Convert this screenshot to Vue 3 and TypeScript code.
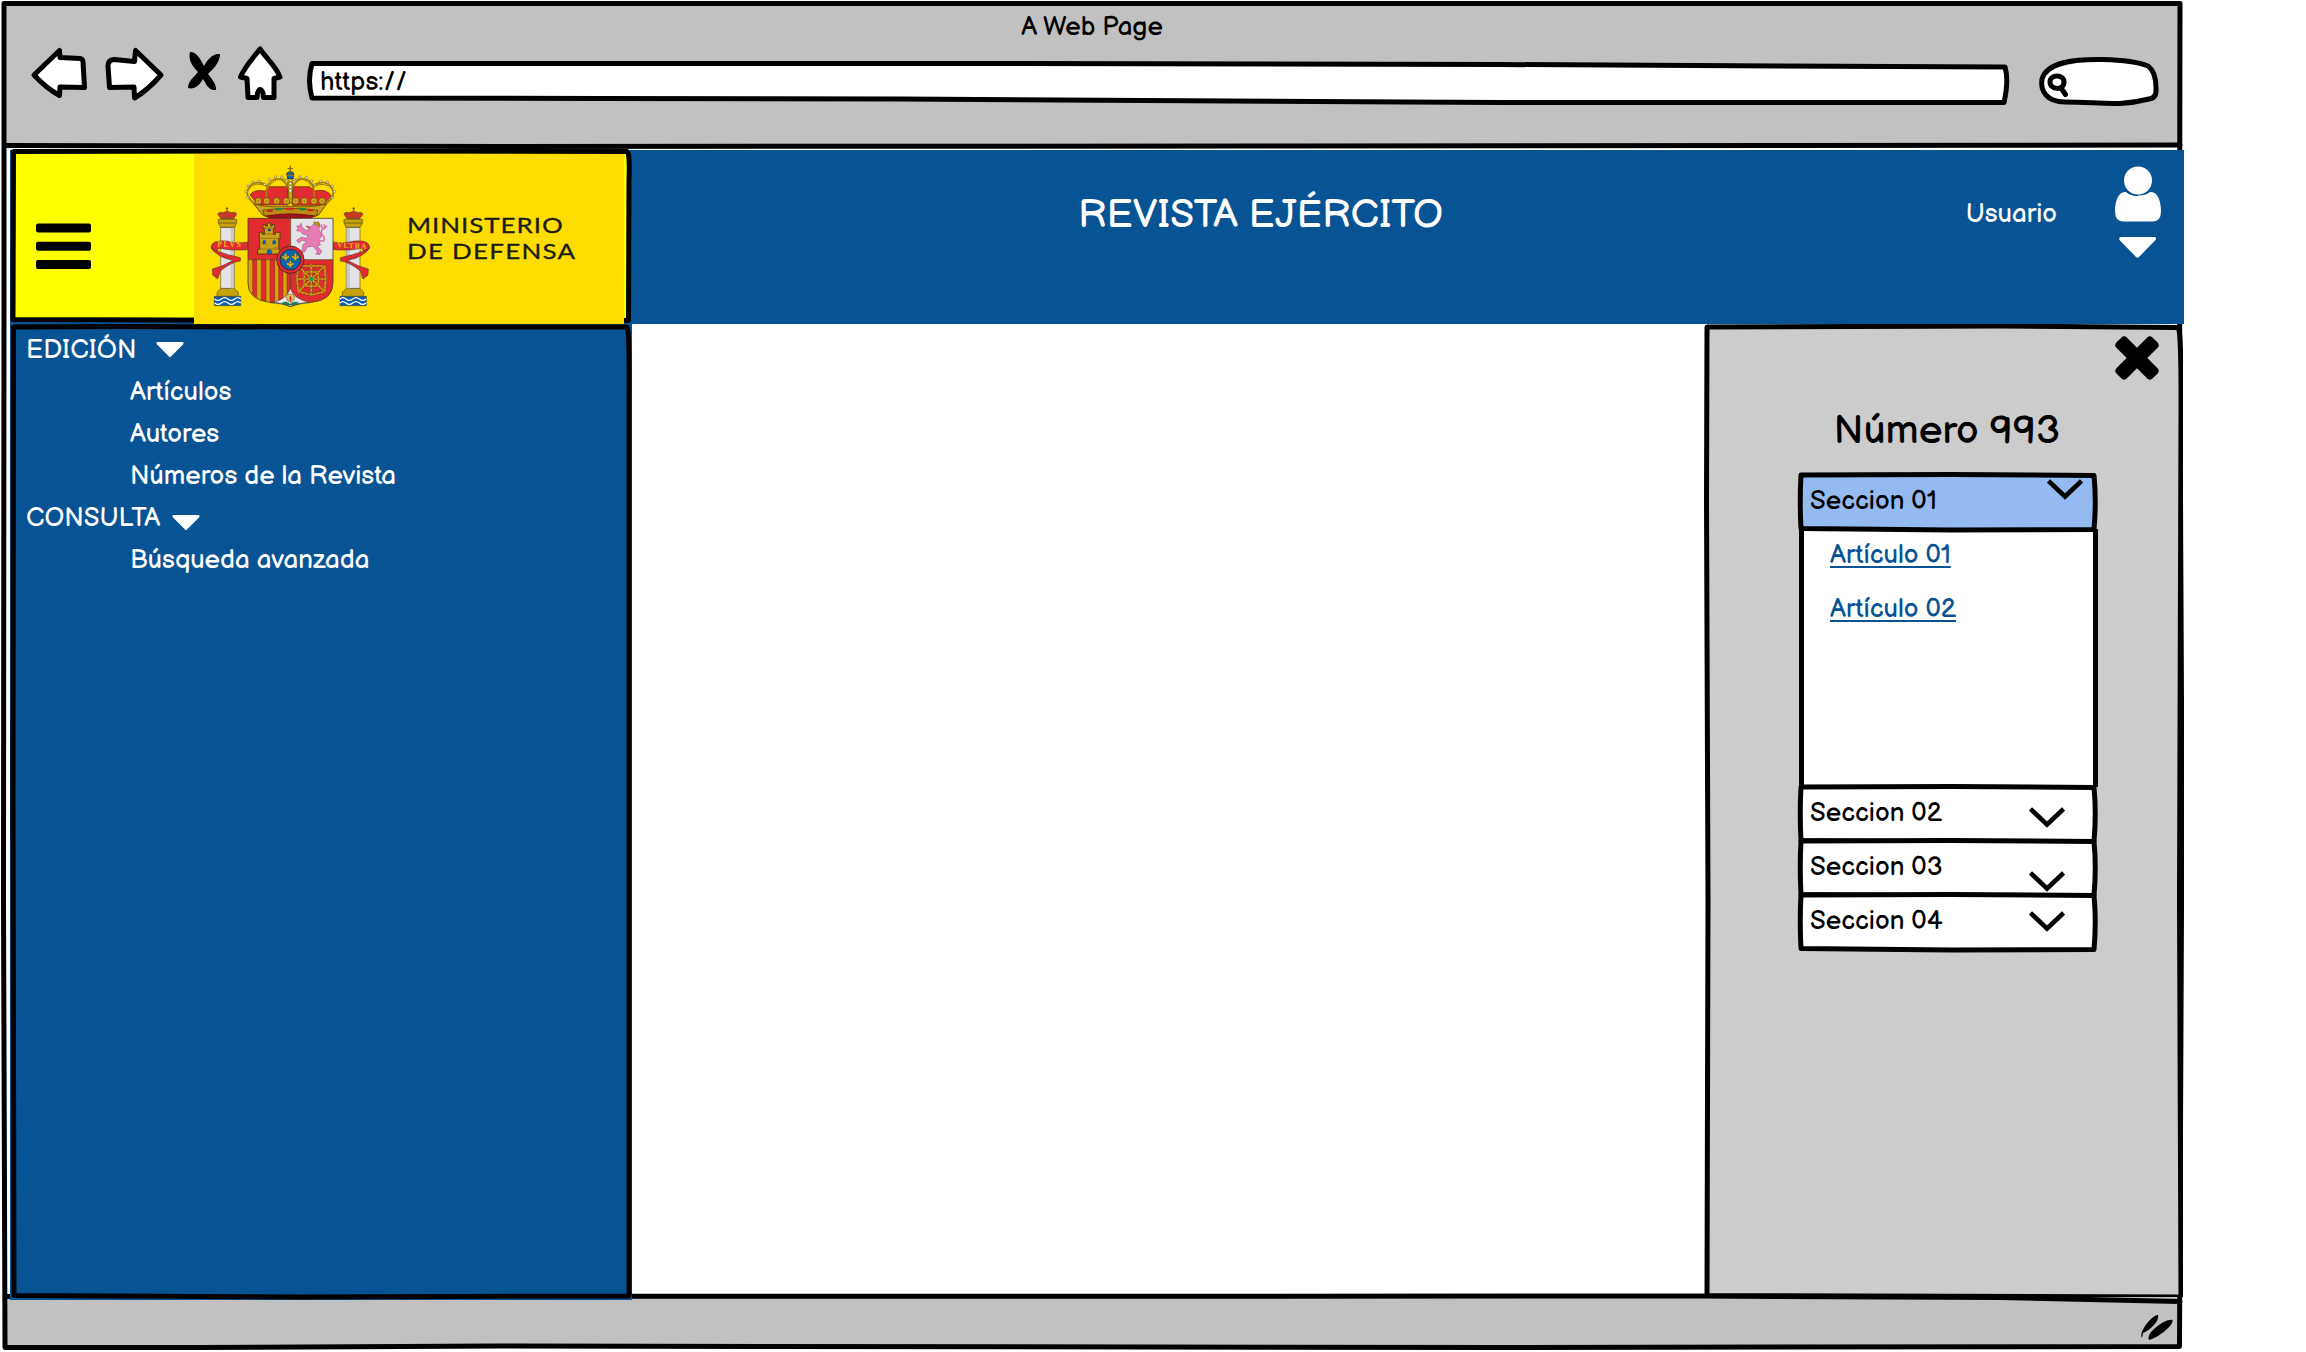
<script setup lang="ts">
import type { Directive } from 'vue'

interface MenuEntry {
  label: string
  group: boolean
  gap?: number
  drop?: number
}

interface Section {
  label: string
  top: number
  inset: number
  open: boolean
}

// Spreads the letters of a label so that it fills the given width.
const vFit: Directive<HTMLElement, number> = {
  mounted(el, { value }) {
    const count = (el.textContent ?? '').trim().length
    el.style.letterSpacing = `${(value - el.offsetWidth) / count}px`
  },
}

const menu: MenuEntry[] = [
  { label: 'EDICIÓN', group: true, gap: 20, drop: -2 },
  { label: 'Artículos', group: false },
  { label: 'Autores', group: false },
  { label: 'Números de la Revista', group: false },
  { label: 'CONSULTA', group: true, gap: 12, drop: 8 },
  { label: 'Búsqueda avanzada', group: false },
]

const articles = ['Artículo 01', 'Artículo 02']

const sections: Section[] = [
  { label: 'Seccion 01', top: 4, inset: 12, open: true },
  { label: 'Seccion 02', top: 20, inset: 30, open: false },
  { label: 'Seccion 03', top: 30, inset: 30, open: false },
  { label: 'Seccion 04', top: 16, inset: 30, open: false },
]

const crownPearls = [
  [173, 157], [169, 140], [174, 123], [188, 112], [207, 109], [224, 118],
  [238, 104], [256, 96], [275, 96], [290, 106], [312, 104], [330, 96],
  [349, 98], [365, 108], [375, 120], [392, 109], [412, 112], [427, 124],
  [433, 140], [427, 158],
]
const chain = [
  'M364 402L325 363M364 402L404 363M364 402L325 440M364 402L404 440',
  'M364 402V358M364 402V448M364 402H321M364 402H407',
  'M325 363H404L407 402L404 440L364 450L325 440L321 402Z',
  'M343 381H385V423H343Z',
]
</script>

<template>
  <div class="window">
    <svg class="layer" width="2184" height="1352" viewBox="0 0 2184 1352">
      <path d="M4 4H2180V146H4Z" fill="#c1c1c1" />
      <path d="M4 1296H2180V1348H5Z" fill="#c1c1c1" />
      <g class="ink">
        <path d="M4 3.5H2180L2179.500 300L2182 800L2179.500 1346.500L1500 1347.500L500 1346L200 1347.500H5L3.500 900L4 300Z" />
        <path d="M5 145.500L500 146.500L1300 146L2180 145" />
        <path d="M6 1296.500L1700 1296L2000 1297.500L2180 1301.500" />
      </g>
      <path d="M2142 1338C2138 1332 2153 1314 2158 1315C2160 1321 2149 1331 2143 1333ZM2149 1340C2145 1333 2166 1318 2172.500 1320C2174 1325 2158 1338 2149 1340Z" />
    </svg>

    <div class="layer shell">
      <header class="toolbar">
        <div class="page-title"><span>A Web Page</span></div>
        <div class="bar">
          <svg class="nav" width="255" height="64" viewBox="30 46 255 64">
            <g class="ink white">
              <path d="M34 75L59.500 50.500L60 57.500L80 58.500Q83 59 83 62L84.500 87.500L60 87L59.500 95.500Q46 88 34 75Z" />
              <path d="M161 75L135.500 50.500L134.500 61.500L114 59.500Q108 60 108 66L109.500 87.500L134 87L134.500 98Q148 90 161 75Z" />
              <path d="M260 49C254 57 245 66 240.500 77L247 78.500L248 97.500L257 97.500L257.500 93Q260 86 263 93L263.500 97.500L274 97.500L274 78.500L280 77C276 66 266 58 260 49Z" />
            </g>
            <path d="M190 52C197 52 201 60 204 66C207 60 213 53 220 54C220 63 212 70 208 74C213 80 217 86 216 90C208 91 206 83 203 79C200 85 194 90 188 88C188 81 194 77 198 72C192 66 188 59 190 52Z" />
          </svg>
          <div class="url">
            <svg class="layer" width="1706" height="64" viewBox="305 46 1706 64">
              <path class="ink white" d="M312 63.500L1000 63.500L1500 64.500L2005 67Q2009 80 2004 102.500L1500 102.500L900 99L600 98.500L312 98Q307 80 312 63.500Z" />
            </svg>
            <span class="layer address">https://</span>
          </div>
          <svg class="search" width="125" height="64" viewBox="2036 46 125 64">
            <path class="ink white" d="M2065 102C2046 102 2040 90 2042 79C2047 62 2074 59 2103 59.500C2122 60 2138 62 2148 66C2155 71 2156 80 2156 88Q2157 98 2149 99C2118 107 2100 102 2065 102Z" />
            <path class="ink" d="M2050 82C2050 74 2064 74 2064 82C2064 91 2050 90 2050 82ZM2061 88L2065.500 94.500" />
          </svg>
        </div>
      </header>

      <div class="masthead">
        <div class="brand">
          <svg class="layer" width="622" height="175" viewBox="10 149 622 175">
            <path d="M13.500 151.500L300 151L627 151.500Q630 152 629 180L628.500 320.500L300 320.500L13 319.500Z" class="ink yellow" />
          </svg>
          <div class="layer brand-row">
            <svg class="burger" width="56" height="48" viewBox="0 0 56 48">
              <rect x="0" y="0.500" width="55" height="9" rx="2" />
              <rect x="0" y="18.700" width="55" height="9" rx="2" />
              <rect x="0" y="37" width="55" height="9" rx="2" />
            </svg>
            <div class="logo">
              <svg width="196" height="170" viewBox="12 27 588 510">
                <g v-for="flip in [false, true]" :key="String(flip)" :transform="flip ? 'matrix(-1 0 0 1 602 0)' : undefined" stroke="#333" stroke-width="1.500">
                  <path d="M73 454H152V482H73Z" fill="#0a5cae" />
                  <path d="M74 462q10 8 20 0t20 0t20 0t18 0M74 474q10 8 20 0t20 0t20 0t18 0" fill="none" stroke="#fff" stroke-width="4" />
                  <path d="M81 454V442L92 430H133L145 442V454Z" fill="#c7a106" />
                  <path d="M92 247H133V430H92Z" fill="#e4e4e6" />
                  <path d="M122 248H132V430H122Z" fill="#c9c9cb" stroke="none" />
                  <path d="M85 223H140V234L134 247H92L85 236Z" fill="#c7a106" />
                  <path d="M86 234H139" />
                  <path d="M93 221L83 207Q88 199 98 203L111 199L125 203Q137 199 140 208L131 221Z" fill="#e02c2f" />
                  <path d="M111 186V201M107 191H115M88 208Q97 202 111 209Q126 202 137 208M94 217H130" fill="none" stroke="#8b5a14" stroke-width="3" />
                  <path d="M173 291Q142 298 110 288Q66 284 63 306Q66 319 83 325Q77 313 91 310Q117 318 173 314Z" fill="#e02c2f" />
                  <path d="M64 308Q75 320 151 338L151 348Q126 350 91 378L83 402L68 390L67 372Q96 365 130 346Q82 338 64 308Z" fill="#e02c2f" />
                </g>
                <g class="motto">
                  <text x="82" y="307" textLength="70">PLVS</text>
                  <text x="441" y="307" textLength="88" transform="rotate(3 441 307)">VLTRA</text>
                </g>

                <!-- Crown -->
                <path d="M196 182Q158 150 178 130Q195 107 235 125Q264 87 301 110Q338 87 368 125Q410 107 427 134Q440 153 405 182L384 212H220Z" fill="#fddc00" stroke="#6e520a" stroke-width="2" />
                <path d="M180 150Q190 132 226 138Q230 128 240 125H294V180H205ZM308 125H360L372 138Q411 130 424 153L398 181H308Z" fill="#e02c2f" stroke="#5d2710" stroke-width="2" />
                <path d="M205 180Q164 160 174 134Q184 109 208 113Q230 116 235 132M396 180Q438 160 428 134Q417 109 393 113Q371 116 367 132M230 158Q225 112 256 102Q286 99 292 130M372 158Q377 112 346 102Q316 99 309 130" class="gold-arc" />
                <path d="M293 112H309L306 175H297Z" fill="#cda817" stroke="#553e09" stroke-width="2" />
                <circle v-for="(p, i) in crownPearls" :key="i" :cx="p[0]" :cy="p[1]" r="3.700" fill="#ece8d8" stroke="#4a3a11" stroke-width="1.300" />
                <circle v-for="y in [115, 126, 137]" :key="y" cx="301" :cy="y" r="4" fill="#fff" stroke="#4a3a11" />
                <path d="M290 85Q301 74 312 85L309 102H293Z" fill="#0a62b3" stroke="#222" stroke-width="2" />
                <path d="M301 62V84M293 71H309M290 91H312" fill="none" stroke="#8c6c0b" stroke-width="4" />
                <path d="M191 177Q248 190 300 183Q353 190 410 177L385 210Q300 224 218 210Z" fill="#c9a21b" stroke="#493108" stroke-width="2" />
                <g v-for="x in [205, 230, 260, 289, 317, 343, 372, 396]" :key="x" stroke="#63430c" stroke-width="2" fill="#d6ae1c">
                  <circle :cx="x" cy="168" r="10" />
                  <path :d="`M${x - 7} 168h14M${x} 161v14`" stroke="#a87913" />
                </g>
                <path d="M218 196Q300 184 384 196L378 214Q300 204 224 214Z" fill="#bb8b13" stroke="#493108" stroke-width="2" />
                <path d="M232 198H248M287 191H312M353 196H369" stroke="#d71e28" stroke-width="6" />
                <path d="M256 193H275M329 193H346" stroke="#16805a" stroke-width="6" />
                <path d="M228 213Q300 200 374 213L362 220H240Z" fill="#9e111b" stroke="#6a0b10" stroke-width="2" />

                <!-- Shield -->
                <path d="M174 220H302V344H174Z" fill="#e02c2f" />
                <path d="M302 220H429V344H302Z" fill="#e4e4e6" />
                <path d="M174 344H302V462Q280 483 240 470Q174 464 174 415Z" fill="#d8a60a" />
                <path d="M188 344H200V457L188 447ZM214 344H228V469L214 465ZM240 344H254V473H240ZM266 344H279V470L266 473ZM291 344H302V440L291 460Z" fill="#e02c2f" stroke="#7c2412" stroke-width="1.500" />
                <path d="M302 344H429V415Q429 466 365 472Q315 471 302 433Z" fill="#e02c2f" />
                <path d="M301 430Q310 462 360 473Q330 475 301 485Q275 475 243 473Q290 466 301 430Z" fill="#e9e9e9" stroke="#333" stroke-width="1.500" />
                <path d="M174 220H429V415Q427 465 365 472Q326 473 301 485Q277 473 240 472Q174 465 174 415Z" fill="none" stroke="#4c3b23" stroke-width="2.500" />
                <path d="M302 220V430M174 344H429" stroke="#503b30" stroke-width="2" />

                <path d="M203 327V313H209V281H208V262H217V268H223V250H219V239H226V243H232V234H242V243H247V239H254V250H250V268H256V262H270V281H266V313H270V327Z" fill="#c9a21b" stroke="#4a3508" stroke-width="2.500" />
                <path d="M208 280H270M221 267H252M207 312H267M225 249H249M214 293H219M229 302H234M254 308H260" stroke="#7c5e0e" stroke-width="2" />
                <path d="M231 327V318Q238 308 245 318V327ZM219 297V289Q223 281 227 289V297ZM248 297V289Q253 281 257 289V297ZM234 258V252H242V258Z" fill="#0969b4" stroke="#333" />

                <path d="M371 236L386 232L391 244L386 253L396 271L387 285L391 300L381 303L395 318L389 329L377 327L383 320L369 304L352 306L345 319L336 324L326 319L337 314L339 299L351 290L337 286L326 294L320 286L334 277L349 280L354 271L338 267L331 259L319 257L325 250L320 243L329 242L333 235L337 247L348 257L358 252L351 243L363 246Z" fill="#e87bb5" stroke="#8f3d69" stroke-width="1.500" />
                <path d="M388 286Q407 294 402 276Q389 263 397 253Q408 247 402 238M397 251L394 238M402 252L411 242" fill="none" stroke="#dc6eaa" stroke-width="4.500" />
                <path d="M371 235L373 229L379 233L383 229L390 240L386 244Z" fill="#c29a13" stroke="#4d3904" />
                <path d="M348 243L360 251" stroke="#e02c2f" stroke-width="3" />

                <g fill="none">
                  <path v-for="d in chain" :key="d" :d="d" stroke="#6c3911" stroke-width="7" />
                  <path v-for="d in chain" :key="`${d}-gold`" :d="d" stroke="#ddb01a" stroke-width="5" />
                  <path v-for="d in chain" :key="`${d}-links`" :d="d" stroke="#a83f18" stroke-width="2" stroke-dasharray="7 5" />
                </g>
                <circle cx="364" cy="402" r="6" fill="#10a151" />

                <circle cx="301" cy="344" r="41" fill="#e02c2f" stroke="#45251e" stroke-width="2.500" />
                <circle cx="301" cy="344" r="31" fill="#0a66b4" stroke="#223" stroke-width="2.500" />
                <g v-for="p in [[287, 335], [316, 335], [301, 356]]" :key="p[0]" fill="#e2bb1b" stroke="#4b4210" stroke-width="1">
                  <path :transform="`translate(${p[0]} ${p[1]})`" d="M0 -12Q6 -5 2 1Q10 -6 11 1Q10 6 4 5L3 11H-3L-4 5Q-10 6 -11 1Q-10 -6 -2 1Q-6 -5 0 -12Z" />
                </g>
                <path d="M276 474Q290 466 300 478Q312 466 327 474Q313 482 301 480Q289 482 276 474Z" fill="#17824f" stroke="#153d28" />
                <path d="M288 455Q291 448 301 447Q312 448 315 456Q313 469 301 472Q290 469 288 455Z" fill="#e3c36a" stroke="#63410d" stroke-width="1.500" />
                <path d="M301 452Q308 460 301 470Q295 460 301 452Z" fill="#d72429" />
              </svg>
              <div class="ministry">
                <span v-fit="133">MINISTERIO</span>
                <span v-fit="143.500">DE DEFENSA</span>
              </div>
            </div>
          </div>
        </div>
        <h1 class="heading">REVISTA EJÉRCITO</h1>
        <div class="user">
          <span class="user-name">Usuario</span>
          <svg width="46" height="93" viewBox="2115 166 46 93" fill="#fff">
            <path d="M2126 192C2118 191 2115 202 2115 211Q2115 221.500 2123 221.500H2153Q2161 221.500 2161 211C2161 202 2158 191 2150 192Q2146 195.500 2138 195.500Q2130 195.500 2126 192Z" />
            <path d="M2127 191.500Q2132 195.500 2138 195" fill="none" stroke="#085394" stroke-width="1.700" />
            <circle cx="2138" cy="180.500" r="14" />
            <path d="M2121 237H2154.500Q2157 237.500 2155.500 240L2139 257Q2137.500 258.500 2136 257L2119.500 240Q2118.500 237.500 2121 237Z" />
          </svg>
        </div>
      </div>

      <div class="body">
        <nav class="sidebar">
          <svg class="layer" width="622" height="976" viewBox="10 324 622 976">
            <path class="ink blue" d="M13.500 327L120 326.500L300 327L627 327Q629.500 327 629 400L629 1296L300 1297L14 1295.500L13 800Z" />
          </svg>
          <ul class="layer menu">
            <li v-for="entry in menu" :key="entry.label" :class="{ child: !entry.group }">
              <span>{{ entry.label }}</span>
              <svg v-if="entry.group" :style="{ marginLeft: `${entry.gap}px`, marginTop: `${entry.drop}px` }" width="28" height="16" viewBox="0 0 28 16" fill="#fff">
                <path d="M1.500 0H26.500Q28.500 .5 27 2.500L15 14.500Q14 15.500 13 14.500L1 2.500Q-.5 .5 1.500 0Z" />
              </svg>
            </li>
          </ul>
        </nav>

        <main class="content"></main>

        <aside class="panel">
          <svg class="layer" width="479" height="973" viewBox="1704 324 479 973">
            <path class="ink gray" d="M1707 327L2000 326L2178 327.500Q2181.500 328 2181 420L2179.500 900L2181 1297L1707 1295.500L1708 900L1706.500 500Z" />
          </svg>
          <div class="layer panel-body">
            <svg class="close" width="44" height="44" viewBox="-22 -22 44 44">
              <rect x="-25.500" y="-7.300" width="51" height="14.600" rx="4" transform="rotate(45)" />
              <rect x="-25.500" y="-7.300" width="51" height="14.600" rx="4" transform="rotate(-45)" />
            </svg>
            <h2 class="issue">Número 993</h2>
            <div class="accordion">
              <section v-for="section in sections" :key="section.label">
                <div class="row">
                  <svg class="layer row-frame" width="294" height="54" viewBox="0 0 294 54">
                    <path :class="['ink', section.open ? 'sky' : 'white']" d="M0 0L150 -.5L293 .5Q295.500 26 293 54.500L150 55L0 53.500Q-1.500 26 0 0Z" />
                  </svg>
                  <div class="layer row-body">
                    <span>{{ section.label }}</span>
                    <svg :style="{ marginTop: `${section.top}px`, marginRight: `${section.inset}px` }" width="36" height="21" viewBox="0 0 36 21">
                      <path d="M1.500 2L18 17.500L34.500 2" fill="none" stroke="#000" stroke-width="4.600" />
                    </svg>
                  </div>
                </div>
                <div v-if="section.open" class="articles">
                  <a v-for="article in articles" :key="article">{{ article }}</a>
                </div>
              </section>
            </div>
          </div>
        </aside>
      </div>
    </div>
  </div>
</template>

<style>
body {
  background: #fff;
}
</style>

<style scoped>
.window {
  display: grid;
  width: 2184px;
  height: 1352px;
  overflow: hidden;
  font: 26px "Balsamiq Sans", Lato, sans-serif;
  color: #000;
}
.layer {
  grid-area: 1 / 1;
}
svg {
  display: block;
  flex: none;
}
span {
  display: inline-block;
  white-space: nowrap;
}
.ink {
  fill: none;
  stroke: #000;
  stroke-width: 5;
  stroke-linejoin: round;
  stroke-linecap: round;
}
.ink.white, .white .ink, g.white { fill: #fff; }
.ink.yellow { fill: #ff0; }
.ink.blue { fill: #085394; }
.ink.gray { fill: #ccc; }
.ink.sky { fill: #94baf2; }

.shell {
  display: flex;
  flex-direction: column;
}
.toolbar {
  height: 149px;
}
.page-title {
  box-sizing: border-box;
  height: 46px;
  padding-top: 7px;
  line-height: 42px;
  text-align: center;
}
.bar {
  display: flex;
  padding-left: 30px;
}
.url {
  display: grid;
  margin-left: 20px;
}
.address {
  height: 64px;
  padding-left: 15px;
  line-height: 73px;
}
.search {
  margin-left: 25px;
}

.masthead {
  display: flex;
  height: 174px;
  margin: 1px 0 0 10px;
  background: #085394;
}
.brand {
  display: grid;
  width: 622px;
  height: 175px;
  margin-top: -1px;
}
.brand-row {
  display: flex;
  padding: 5px 0 0 26px;
}
.burger {
  margin-top: 69px;
}
.logo {
  display: flex;
  width: 430px;
  height: 170px;
  margin-left: 102px;
  background: #fddc00;
}
.ministry {
  display: flex;
  flex-direction: column;
  align-items: flex-start;
  margin: 58px 0 0 17px;
  font: 22px/26px Lato, sans-serif;
  color: #1c1c1b;
  transform: scaleX(1.180);
  transform-origin: left top;
  -webkit-text-stroke: 0.3px #1c1c1b;
}
.motto {
  font: bold 23px "Liberation Serif", serif;
  fill: #eeb321;
}
.gold-arc {
  fill: none;
  stroke: #a67d14;
  stroke-width: 5;
}
.heading {
  margin: 42px 0 0 446px;
  font-size: 40px;
  font-weight: 400;
  line-height: 46px;
  white-space: nowrap;
  color: #fff;
}
.user {
  display: flex;
  gap: 58px;
  margin: 16px 23px 0 auto;
  color: #fff;
}
.user-name {
  margin-top: 29px;
  line-height: 40px;
}

.body {
  display: flex;
  height: 976px;
  margin-left: 10px;
}
.sidebar {
  display: grid;
  width: 622px;
  background: #085394;
}
.menu {
  margin: 6px 0 0;
  padding: 0 0 0 16px;
  list-style: none;
  color: #fff;
}
.menu li {
  display: flex;
  align-items: center;
  height: 42px;
  line-height: 42px;
}
.menu .child {
  padding-left: 104px;
}
.content {
  width: 1072px;
}
.panel {
  display: grid;
}
.panel-body {
  display: flex;
  flex-direction: column;
}
.close {
  align-self: flex-end;
  margin: 12px 24px 0 0;
}
.issue {
  margin: 27px 0 0;
  padding-left: 7px;
  font-size: 40px;
  font-weight: 400;
  line-height: 48px;
  text-align: center;
}
.accordion {
  width: 294px;
  margin: 20px 0 0 97px;
}
.row {
  display: grid;
  height: 54px;
}
.row-frame {
  position: relative;
  overflow: visible;
}
.row-body {
  position: relative;
  display: flex;
  justify-content: space-between;
  align-items: flex-start;
  padding-left: 9px;
  line-height: 53px;
}
.articles {
  display: flex;
  flex-direction: column;
  align-items: flex-start;
  box-sizing: border-box;
  height: 258px;
  padding-left: 26px;
  border: solid #000;
  border-width: 0 5px;
  margin: 0 -3px 0 -2px;
  background: #fff;
}
.articles a {
  line-height: 54px;
  color: #085394;
  text-decoration: underline 2px;
  text-underline-offset: 3px;
}
</style>
